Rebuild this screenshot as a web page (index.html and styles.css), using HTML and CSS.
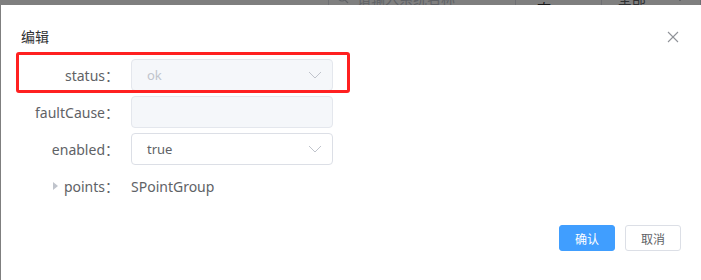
FILE: index.html
```html
<!DOCTYPE html>
<html lang="zh-CN">
<head>
    <meta charset="UTF-8">
    <title>编辑</title>
    <link rel="stylesheet" href="styles.css">
</head>
<body>
    <!-- page behind the dialog, only a sliver of the toolbar shows -->
    <div class="page">
        <div class="toolbar">
            <div class="search-box">
                <svg class="search-icon" width="12" height="12" viewBox="0 0 12 12">
                    <circle cx="5" cy="5" r="4" fill="none" stroke="#c0c4cc" stroke-width="1.2"/>
                    <line x1="8" y1="8" x2="11" y2="11" stroke="#c0c4cc" stroke-width="1.2"/>
                </svg>
                <span class="placeholder">请输入系统名称</span>
            </div>
            <span class="toolbar-label">系统状态:</span>
            <div class="toolbar-select">
                <span>全部</span>
                <svg width="12" height="7" viewBox="0 0 12 7"><polyline points="1,1 6,6 11,1" fill="none" stroke="#c0c4cc"/></svg>
            </div>
        </div>
    </div>

    <div class="overlay">
        <div class="dialog">
            <div class="dialog-header">
                <span class="dialog-title">编辑</span>
                <svg class="close-btn" width="12" height="12" viewBox="0 0 12 12">
                    <line x1="1" y1="1" x2="11" y2="11" stroke="#909399" stroke-width="1.1"/>
                    <line x1="11" y1="1" x2="1" y2="11" stroke="#909399" stroke-width="1.1"/>
                </svg>
            </div>

            <div class="dialog-body">
                <div class="form-row highlighted">
                    <label class="form-label">status：</label>
                    <div class="input select disabled">
                        <span>ok</span>
                        <svg class="arrow" width="14" height="8" viewBox="0 0 14 8"><polyline points="1,1 7,7 13,1" fill="none" stroke="#c0c4cc"/></svg>
                    </div>
                    <div class="mark-box"></div>
                </div>
                <div class="form-row">
                    <label class="form-label">faultCause：</label>
                    <div class="input disabled"></div>
                </div>
                <div class="form-row">
                    <label class="form-label">enabled：</label>
                    <div class="input select">
                        <span>true</span>
                        <svg class="arrow" width="14" height="8" viewBox="0 0 14 8"><polyline points="1,1 7,7 13,1" fill="none" stroke="#c0c4cc"/></svg>
                    </div>
                </div>
                <div class="form-row">
                    <label class="form-label"><span class="caret"></span>points：</label>
                    <span class="form-value">SPointGroup</span>
                </div>
            </div>

            <div class="dialog-footer">
                <button class="btn btn-primary">确认</button>
                <button class="btn">取消</button>
            </div>
        </div>
    </div>
</body>
</html>
```

FILE: styles.css
```css
/* base */
body {
    margin: 0;
    font-family: "Noto Sans", "Noto Sans CJK SC", sans-serif;
    background-color: #fff;
    color: #606266;
    overflow: hidden;
}

/* page under the mask */
.page {
    height: 280px;
}

.toolbar {
    display: flex;
    align-items: center;
    height: 32px;
    margin-top: -18px;
    padding-left: 328px;
    font-size: 14px;
}

.search-box {
    display: flex;
    align-items: center;
    width: 199px;
    height: 30px;
    border: 1px solid #dcdfe6;
    border-radius: 4px;
}

.search-icon {
    margin: 0 8px 0 8px;
}

.placeholder {
    color: #c0c4cc;
}

.toolbar-label {
    margin-left: 21px;
    color: #303133;
}

.toolbar-select {
    display: flex;
    align-items: center;
    justify-content: space-between;
    width: 73px;
    height: 30px;
    margin-left: 8px;
    padding: 0 14px 0 16px;
    border: 1px solid #dcdfe6;
    border-radius: 4px;
}

/* mask + dialog */
.overlay {
    position: fixed;
    top: 0;
    left: 0;
    right: 0;
    bottom: 0;
    background-color: rgba(0, 0, 0, 0.5);
    padding: 5px 0 0 1px;
}

.dialog {
    width: 700px;
    height: 320px;
    background-color: #fff;
}

.dialog-header {
    display: flex;
    align-items: center;
    justify-content: space-between;
    padding: 20px 22px 10px 20px;
    height: 24px;
}

.dialog-title {
    font-size: 14px;
    line-height: 24px;
    color: #303133;
}

.dialog-body {
    padding: 0 20px;
}

.form-row {
    position: relative;
    display: flex;
    align-items: center;
    height: 32px;
    margin-bottom: 5px;
}

.form-label {
    display: flex;
    align-items: center;
    justify-content: flex-end;
    width: 98px;
    padding-right: 12px;
    font-size: 14px;
    color: #606266;
}

.caret {
    width: 0;
    height: 0;
    border-top: 4px solid transparent;
    border-bottom: 4px solid transparent;
    border-left: 5px solid #c0c4cc;
    margin-right: 6px;
}

.form-value {
    font-size: 14px;
    color: #606266;
}

.input {
    display: flex;
    align-items: center;
    justify-content: space-between;
    box-sizing: border-box;
    width: 202px;
    height: 32px;
    padding: 0 10px 0 15px;
    border: 1px solid #dcdfe6;
    border-radius: 4px;
    font-size: 13px;
    color: #606266;
}

.input.disabled {
    background-color: #f5f7fa;
    border-color: #e4e7ed;
    color: #c0c4cc;
}

/* red annotation drawn round the first row */
.mark-box {
    position: absolute;
    left: -5px;
    top: -7px;
    width: 328px;
    height: 35px;
    border: 3px solid #ff2020;
    border-radius: 3px;
}

.dialog-footer {
    display: flex;
    justify-content: flex-end;
    gap: 10px;
    padding: 18px 20px 20px;
}

.btn {
    box-sizing: border-box;
    height: 26px;
    width: 56px;
    padding: 0;
    font-family: "Noto Sans CJK SC", sans-serif;
    font-size: 12px;
    color: #606266;
    background-color: #fff;
    border: 1px solid #dcdfe6;
    border-radius: 3px;
}

.btn-primary {
    color: #fff;
    background-color: #409eff;
    border-color: #409eff;
}
```
